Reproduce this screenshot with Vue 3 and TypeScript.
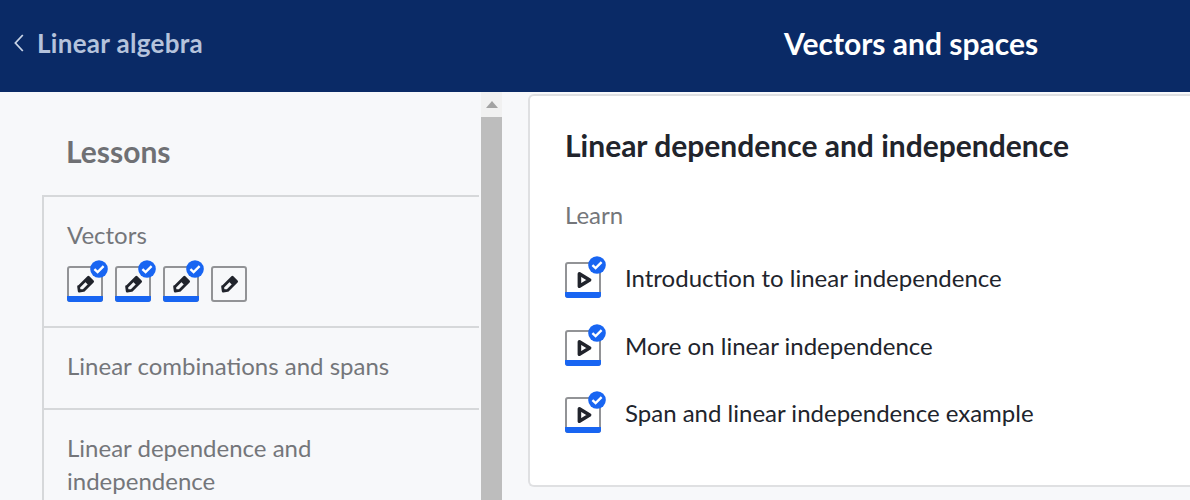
<script setup lang="ts">
const lessons = [
  { title: 'Vectors', marks: [true, true, true, false] },
  { title: 'Linear combinations and spans', marks: [] as boolean[] },
  { title: 'Linear dependence and independence', marks: [] as boolean[] },
];

const videos = [
  'Introduction to linear independence',
  'More on linear independence',
  'Span and linear independence example',
];
</script>

<template>
  <div class="page">
    <header class="topbar">
      <a class="back">
        <svg class="chevron" width="10" height="18" viewBox="0 0 10 18">
          <path d="M8.8 1 1.4 9l7.4 8" fill="none" stroke="currentColor" stroke-width="1.8" />
        </svg>
        <span>Linear algebra</span>
      </a>
      <h1 class="unit">Vectors and spaces</h1>
    </header>

    <div class="body">
      <aside class="sidebar">
        <div class="nav">
          <h2 class="nav-title">Lessons</h2>
          <ul class="lessons">
            <li v-for="lesson in lessons" :key="lesson.title" class="lesson">
              <div class="lesson-title">{{ lesson.title }}</div>
              <div v-if="lesson.marks.length" class="marks">
                <span
                  v-for="(done, i) in lesson.marks"
                  :key="i"
                  class="tile"
                  :class="{ done }"
                >
                  <svg width="20" height="20" viewBox="0 0 20 20">
                    <path
                      d="M13.4 3.2 17.6 7.4 8.6 16.4 4.2 17 3.6 12.6 4.4 12.2Z"
                      fill="none"
                      stroke="#21242c"
                      stroke-width="2.8"
                      stroke-linejoin="round"
                    />
                    <path d="M12.8 3.4 17.4 8 13.8 11.6 9.2 7Z" fill="#21242c" />
                  </svg>
                  <svg v-if="done" class="badge" width="18" height="18" viewBox="0 0 18 18">
                    <circle cx="9" cy="9" r="8.8" fill="#1865f2" />
                    <path d="M4.4 9.2 7.6 12.2 13.6 6.2" fill="none" stroke="#fff" stroke-width="2.4" />
                  </svg>
                </span>
              </div>
            </li>
          </ul>
        </div>
        <div class="scrollbar">
          <div class="scroll-up"><span class="arrow"></span></div>
          <div class="scroll-thumb"></div>
        </div>
      </aside>

      <main class="content">
        <section class="card">
          <h2 class="card-title">Linear dependence and independence</h2>
          <div class="learn">Learn</div>
          <ul class="videos">
            <li v-for="video in videos" :key="video" class="video">
              <span class="tile done">
                <svg width="20" height="20" viewBox="0 0 20 20">
                  <path
                    d="M6.4 3.8 16.6 10 6.4 16.2Z"
                    fill="none"
                    stroke="#21242c"
                    stroke-width="3.6"
                    stroke-linejoin="round"
                  />
                </svg>
                <svg class="badge" width="18" height="18" viewBox="0 0 18 18">
                  <circle cx="9" cy="9" r="8.8" fill="#1865f2" />
                  <path d="M4.4 9.2 7.6 12.2 13.6 6.2" fill="none" stroke="#fff" stroke-width="2.4" />
                </svg>
              </span>
              <span class="video-title">{{ video }}</span>
            </li>
          </ul>
        </section>
      </main>
    </div>
  </div>
</template>

<style>
html,
body {
  margin: 0;
  background: #f7f8fa;
}
</style>

<style scoped>
.page {
  width: 1190px;
  height: 500px;
  overflow: hidden;
  display: flex;
  flex-direction: column;
  font-family: Lato, 'Open Sans', sans-serif;
  background: #f7f8fa;
}

.topbar {
  height: 92px;
  flex: none;
  background: #0a2a66;
  display: flex;
  align-items: center;
  position: relative;
}

.back {
  display: flex;
  align-items: center;
  gap: 13px;
  margin-left: 14px;
  margin-top: -7px;
  color: #b5c3dc;
  font-size: 26px;
  font-weight: 700;
  letter-spacing: 0.3px;
}

.chevron {
  color: #c9d4e6;
}

.unit {
  position: absolute;
  left: 784px;
  top: 24px;
  margin: 0;
  color: #fff;
  font-size: 30px;
  line-height: 38px;
  font-weight: 700;
}

.body {
  flex: 1;
  display: flex;
  min-height: 0;
}

.sidebar {
  width: 502px;
  flex: none;
  display: flex;
  overflow: hidden;
}

.nav {
  width: 481px;
  flex: none;
  padding: 0 2px 0 42px;
  box-sizing: border-box;
}

.nav-title {
  margin: 0;
  padding: 41px 0 0 24px;
  height: 103px;
  box-sizing: border-box;
  color: #6f7074;
  font-size: 30px;
  line-height: 36px;
  font-weight: 700;
}

.lessons {
  list-style: none;
  margin: 0;
  padding: 0;
  border-left: 2px solid #d6d8da;
  border-top: 2px solid #d6d8da;
}

.lesson {
  padding: 21px 24px 26px 23px;
  border-bottom: 2px solid #d6d8da;
  color: #74767a;
  font-size: 24px;
  line-height: 33px;
}

.lesson:first-child {
  padding-bottom: 24px;
}

.marks {
  display: flex;
  gap: 12px;
  margin-top: 15px;
}

.tile {
  position: relative;
  width: 36px;
  height: 36px;
  flex: none;
  box-sizing: border-box;
  border: 2px solid #929396;
  border-radius: 3px;
  display: flex;
  align-items: center;
  justify-content: center;
}

.tile.done::after {
  content: '';
  position: absolute;
  left: -2px;
  right: -2px;
  bottom: -2px;
  height: 6px;
  background: #1865f2;
  border-radius: 0 0 3px 3px;
}

.tile .badge {
  position: absolute;
  right: -7px;
  top: -8px;
}

.scrollbar {
  width: 21px;
  flex: none;
  display: flex;
  flex-direction: column;
}

.scroll-up {
  height: 25px;
  background: #f1f1f1;
  display: flex;
  justify-content: center;
  padding-top: 9px;
  box-sizing: border-box;
}

.arrow {
  width: 0;
  height: 0;
  border-left: 6px solid transparent;
  border-right: 6px solid transparent;
  border-bottom: 7px solid #a3a3a3;
}

.scroll-thumb {
  flex: 1;
  background: #bdbdbd;
}

.content {
  flex: 1;
  min-width: 0;
  padding: 2px 0 13px 26px;
  display: flex;
}

.card {
  flex: 1;
  background: #fff;
  border: 2px solid #dfe0e2;
  border-right: 0;
  border-radius: 6px 0 0 6px;
  padding: 28px 0 0 35px;
  box-sizing: border-box;
}

.card-title {
  margin: 0;
  color: #21242c;
  font-size: 30px;
  line-height: 42px;
  font-weight: 700;
}

.learn {
  margin-top: 34px;
  color: #74767a;
  font-size: 24px;
  line-height: 30px;
}

.videos {
  list-style: none;
  margin: 32px 0 0;
  padding: 0;
}

.video {
  display: flex;
  align-items: center;
  gap: 24px;
  height: 36px;
  margin-bottom: 31.5px;
}

.video-title {
  margin-bottom: 4px;
  color: #21242c;
  font-size: 24px;
  line-height: 32px;
}
</style>
